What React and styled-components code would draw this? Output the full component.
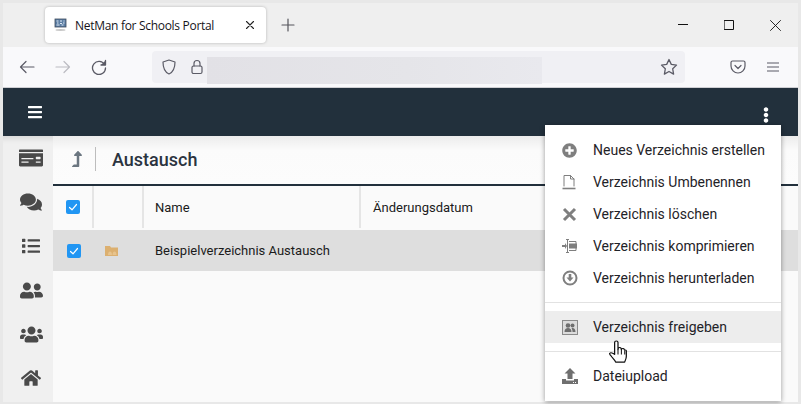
import React from 'react';
import styled, { createGlobalStyle } from 'styled-components';
import {
  FaBars, FaEllipsisV, FaMoneyCheck, FaComments, FaList, FaUserFriends, FaUsers, FaHome,
  FaLevelUpAlt, FaPlusCircle,
} from 'react-icons/fa';

const Global = createGlobalStyle`
  html, body { margin: 0; padding: 0; width: 801px; height: 404px; overflow: hidden; background: #e8e8e8; }
  * { box-sizing: border-box; }
`;

const Frame = styled.div`
  position: relative;
  width: 801px;
  height: 404px;
  padding: 3px 3px 2px 3px;
  display: flex;
  flex-direction: column;
  overflow: hidden;
`;

const TabBar = styled.div`
  height: 44px;
  flex: none;
  background: #efefef;
  display: flex;
  align-items: flex-start;
  padding: 4px 0 0 42px;
`;

const Tab = styled.div`
  width: 221px;
  height: 36px;
  background: #fff;
  border-radius: 4px;
  box-shadow: 0 0 3px rgba(0, 0, 0, 0.25);
  display: flex;
  align-items: center;
  padding: 0 11px 0 9px;
  font: 12px "Open Sans", sans-serif;
  letter-spacing: -0.3px;
  color: #15141a;
`;

const TabTitle = styled.span`
  flex: 1;
  margin-left: 8px;
  white-space: nowrap;
`;

const NewTab = styled.div`
  margin: 11px 0 0 15px;
  width: 14px;
  height: 14px;
  color: #55555c;
`;

const WindowControls = styled.div`
  margin-left: auto;
  display: flex;
  gap: 36px;
  padding: 13px 17px 0 0;
  color: #111;
`;

const NavBar = styled.div`
  height: 41px;
  flex: none;
  background: #f9f9fb;
  border-bottom: 1px solid #cfcfd3;
  display: flex;
  align-items: center;
  padding: 0 0 0 16px;
  color: #5b5b66;
`;

const NavGroup = styled.div`
  display: flex;
  gap: 20px;
  align-items: center;
`;

const UrlBar = styled.div`
  width: 533px;
  height: 32px;
  margin-left: 45px;
  margin-top: -1px;
  background: #f0f0f4;
  border-radius: 4px;
  display: flex;
  align-items: center;
  padding-left: 9px;
`;

const UrlGap = styled.span`
  width: 13px;
`;

const BlurredUrl = styled.div`
  width: 335px;
  height: 27px;
  margin: 6px 0 0 3px;
  align-self: flex-start;
  background: linear-gradient(90deg, #e2e1e6, #e5e5e9 60%, #e9e9ee);
`;

const Star = styled.div`
  margin-left: auto;
  margin-right: 7px;
  height: 18px;
`;

const NavEnd = styled.div`
  display: flex;
  gap: 20px;
  margin-left: 45px;
  align-items: center;
`;

const Header = styled.header`
  height: 48px;
  flex: none;
  background: #22303c;
  color: #fff;
  display: flex;
  align-items: center;
  justify-content: space-between;
  padding: 0 24px 0 24px;
  font-size: 16px;
`;

const MoreButton = styled.div`
  display: flex;
  margin-top: 6px;
`;

const Body = styled.div`
  flex: 1;
  display: flex;
  min-height: 0;
  font-family: Roboto, sans-serif;
`;

const SideNav = styled.nav`
  width: 50px;
  flex: none;
  background: #f0f0f0;
  display: flex;
  flex-direction: column;
  color: #4a4a4a;
  box-shadow: inset 0 8px 6px -6px rgba(0, 0, 0, 0.12);
`;

const SideItem = styled.div`
  height: 44px;
  flex: none;
  width: 100%;
  display: flex;
  align-items: center;
  justify-content: center;
  padding-left: 6px;
  font-size: ${p => p.$size}px;
`;

const Main = styled.main`
  flex: 1;
  min-width: 0;
  background: #fafafa;
`;

const TitleBar = styled.div`
  height: 50px;
  border-bottom: 2px solid #22303c;
  background: linear-gradient(180deg, #ececec 0%, #fbfbfb 30%, #fcfcfc 100%);
  display: flex;
  align-items: center;
  padding: 0 0 2px 16px;
  color: #6b7680;
`;

const TitleRule = styled.div`
  width: 1px;
  height: 24px;
  background: #bdbdbd;
  margin-left: 10px;
`;

const Title = styled.h1`
  margin: 0 0 0 16px;
  font: 500 18px Roboto, sans-serif;
  color: #2b3440;
`;

const Row = styled.div`
  display: grid;
  grid-template-columns: 41px 50px 217px 1fr;
  height: ${p => p.$h}px;
  background: ${p => p.$bg};
  align-items: stretch;
  font-size: 13px;
  color: #1b1b1b;
  margin-bottom: ${p => p.$mb || 0}px;
`;

const Cell = styled.div`
  display: flex;
  align-items: center;
  justify-content: ${p => (p.$center ? 'center' : 'flex-start')};
  padding-left: ${p => p.$pad || 0}px;
  border-right: ${p => (p.$line ? '2px solid #e5e5e5' : '0')};
`;

const Checkbox = styled.div`
  width: 14px;
  height: 14px;
  border-radius: 2px;
  background: #2196f3;
  display: flex;
  align-items: center;
  justify-content: center;
`;

const Menu = styled.div`
  position: absolute;
  left: 545px;
  top: 125px;
  width: 236px;
  height: 276px;
  background: #fff;
  box-shadow: 0 1px 5px rgba(0, 0, 0, 0.4);
  font-family: Roboto, sans-serif;
  padding-top: 9px;
`;

const MenuItem = styled.div`
  height: 32px;
  display: flex;
  align-items: center;
  padding-left: 17px;
  font-size: 14px;
  color: #1f2328;
  background: ${p => (p.$active ? '#ededed' : 'transparent')};
`;

const MenuIcon = styled.div`
  width: 31px;
  display: flex;
  justify-content: flex-start;
  align-items: center;
  color: #7f7f7f;
  font-size: 15px;
`;

const MenuDivider = styled.div`
  height: 1px;
  background: #e2e2e2;
  margin: 8px 0;
`;

const Pointer = styled.svg`
  position: absolute;
  left: 609px;
  top: 340px;
`;

const Stroke = ({ w = 18, h = 18, vb = '0 0 18 18', sw = 1.5, color = 'currentColor', children }) => (
  <svg width={w} height={h} viewBox={vb} fill="none" stroke={color} strokeWidth={sw} strokeLinecap="round" strokeLinejoin="round">
    {children}
  </svg>
);

const Tick = () => (
  <Stroke w={10} h={10} vb="0 0 10 10" sw={1.2} color="#fff"><path d="M1.500 5.500l2.500 2.300 4.500-5.300" /></Stroke>
);

const Favicon = () => (
  <svg width="13" height="14" viewBox="0 0 13 14">
    <rect x="1" y="1" width="11" height="8" fill="#5b7da3" stroke="#3c4a5c" strokeWidth="0.8" />
    <path d="M2.500 3h2M6 3h2M9.500 3h1M3 5h1.500M6 5.500h2M9 5h1.500M2.500 7h3M7.500 7h2" stroke="#dfeaf5" strokeWidth="1" />
    <ellipse cx="6.500" cy="12" rx="5" ry="0.9" fill="#c8c8c8" />
  </svg>
);

const BrowserChrome = () => (
  <>
    <TabBar>
      <Tab>
        <Favicon />
        <TabTitle>NetMan for Schools Portal</TabTitle>
        <Stroke w={10} h={10} vb="0 0 10 10" sw={1.1} color="#222"><path d="M1.500 1.500l7 7M8.500 1.500l-7 7" /></Stroke>
      </Tab>
      <NewTab>
        <Stroke w={14} h={14} vb="0 0 14 14" sw={1.2}><path d="M7 1v12M1 7h12" /></Stroke>
      </NewTab>
      <WindowControls>
        <Stroke w={10} h={10} vb="0 0 10 10" sw={1} color="#111"><path d="M0 4.500h10" strokeLinecap="butt" /></Stroke>
        <Stroke w={10} h={10} vb="0 0 10 10" sw={1} color="#111"><rect x=".5" y=".5" width="9" height="9" /></Stroke>
        <Stroke w={11} h={11} vb="0 0 11 11" sw={0.9} color="#111"><path d="M.5.5l10 10M10.500.5l-10 10" /></Stroke>
      </WindowControls>
    </TabBar>
    <NavBar>
      <NavGroup>
        <Stroke w={16} h={16} vb="0 0 16 16" sw={1.2}><path d="M15 8H1.500M7 2.500L1.500 8 7 13.500" /></Stroke>
        <Stroke w={16} h={16} vb="0 0 16 16" sw={1.2} color="#bcbcc2"><path d="M1 8h13.500M9 2.500L14.500 8 9 13.500" /></Stroke>
        <Stroke w={16} h={16} vb="0 0 16 16" sw={1.3}><path d="M13.500 5.500A6.500 6.500 0 1 0 14.500 9" /><path d="M14.500 1.500v4.500H10" fill="currentColor" /></Stroke>
      </NavGroup>
      <UrlBar>
        <Stroke w={16} h={16} vb="0 0 16 16" sw={1.2}><path d="M8 1l6 2c0 6-1.500 10-6 12C3.500 13 2 9 2 3z" /></Stroke>
        <UrlGap />
        <Stroke w={14} h={16} vb="0 0 14 16" sw={1.2}><rect x="2" y="7" width="10" height="7.500" rx="1.500" /><path d="M4 7V4.500a3 3 0 0 1 6 0V7" /></Stroke>
        <BlurredUrl />
        <Star>
          <Stroke w={18} h={18} vb="0 0 18 18" sw={1.3}><path d="M9 1.500l2.300 4.900 5.200.7-3.800 3.700.9 5.300L9 13.500l-4.600 2.600.9-5.300-3.800-3.700 5.200-.7z" /></Stroke>
        </Star>
      </UrlBar>
      <NavEnd>
        <Stroke w={16} h={16} vb="0 0 16 16" sw={1.2}><path d="M2.500 2h11A1.500 1.500 0 0 1 15 3.500V7a7 7 0 0 1-14 0V3.500A1.500 1.500 0 0 1 2.500 2z" /><path d="M5 6.500l3 3 3-3" /></Stroke>
        <Stroke w={14} h={14} vb="0 0 14 14" sw={1.1}><path d="M1 3h12M1 7h12M1 11h12" strokeLinecap="butt" /></Stroke>
      </NavEnd>
    </NavBar>
  </>
);

const sideIcons = [
  [FaMoneyCheck, 24], [FaComments, 22], [FaList, 18],
  [FaUserFriends, 23], [FaUsers, 23], [FaHome, 20],
];

const ActionIcons = {
  rename: (
    <Stroke w={14} h={16} vb="0 0 14 16" sw={1}>
      <path d="M2 12V1.500h6.500L12 5v7M8.500 1.500V5H12" />
      <path d="M0.500 14.500h13" strokeWidth="1.600" strokeLinecap="butt" />
    </Stroke>
  ),
  remove: (
    <Stroke w={15} h={15} vb="0 0 15 15" sw={3} color="#7f7f7f">
      <path d="M2 2l11 11M13 2L2 13" strokeLinecap="butt" />
    </Stroke>
  ),
  compress: (
    <svg width="15" height="14" viewBox="0 0 15 14" fill="#7f7f7f">
      <path d="M0 6h3V4l2 3-2 3V8H0z" />
      <path d="M5.500 .5v13M4 .5h3M4 13.500h3" stroke="#7f7f7f" strokeWidth="1" fill="none" />
      <path d="M7 2.500h7v9H7" stroke="#7f7f7f" strokeWidth="1" fill="none" />
      <rect x="7" y="4.500" width="8" height="5" />
    </svg>
  ),
  download: (
    <svg width="16" height="16" viewBox="0 0 16 16">
      <circle cx="8" cy="8" r="6.500" fill="none" stroke="#7f7f7f" strokeWidth="2" />
      <path d="M6.700 4h2.600v3.500H11.500L8 11.500 4.500 7.500h2.200z" fill="#7f7f7f" />
    </svg>
  ),
  share: (
    <svg width="16" height="15" viewBox="0 0 16 15">
      <rect x=".5" y=".5" width="15" height="14" fill="#dcdcdc" stroke="#8a8a8a" />
      <circle cx="6" cy="5.500" r="2.300" fill="#6e6e6e" />
      <circle cx="10.500" cy="5.500" r="2" fill="#6e6e6e" />
      <path d="M2.500 12c0-3 1.500-4 3.500-4s3.500 1 3.500 4zM10.500 12c0-1.500-.3-2.800-1-3.700 2-.7 4 .3 4 3.700z" fill="#6e6e6e" />
    </svg>
  ),
  upload: (
    <svg width="16" height="16" viewBox="0 0 16 16" fill="#6f6f6f">
      <path d="M8 0l5.500 5.500H10.500V11h-5V5.500H2.500z" />
      <path d="M0 11h4v1.500h8V11h4v5H0z" />
      <path d="M11 14h1v1h-1zM13 14h1v1h-1z" fill="#fff" />
    </svg>
  ),
};

const items = [
  [<FaPlusCircle key="i" />, 'Neues Verzeichnis erstellen'],
  [ActionIcons.rename, 'Verzeichnis Umbenennen'],
  [ActionIcons.remove, 'Verzeichnis löschen'],
  [ActionIcons.compress, 'Verzeichnis komprimieren'],
  [ActionIcons.download, 'Verzeichnis herunterladen'],
];

export default function App() {
  return (
    <Frame>
      <Global />
      <BrowserChrome />
      <Header>
        <FaBars />
        <MoreButton><FaEllipsisV /></MoreButton>
      </Header>
      <Body>
        <SideNav>
          {sideIcons.map(([Icon, size], i) => (
            <SideItem key={i} $size={size}><Icon /></SideItem>
          ))}
        </SideNav>
        <Main>
          <TitleBar>
            <FaLevelUpAlt size={16} />
            <TitleRule />
            <Title>Austausch</Title>
          </TitleBar>
          <Row $h={42} $bg="#fafafa" $mb={2}>
            <Cell $center $line><Checkbox><Tick /></Checkbox></Cell>
            <Cell $line />
            <Cell $pad={11} $line>Name</Cell>
            <Cell $pad={12}>Änderungsdatum</Cell>
          </Row>
          <Row $h={41} $bg="#dedede">
            <Cell $center><Checkbox><Tick /></Checkbox></Cell>
            <Cell $pad={11}>
              <svg width="13" height="10" viewBox="0 0 13 10">
                <path d="M0 0h5l1 1.500h7V10H0z" fill="#dcb070" />
                <path d="M3 9c0-2.500 1-3.500 2-3.500S7 6.500 7 9zM7.500 9c0-2 .8-3.500 2-3.500s2 1.500 2 3.500z" fill="#e8c48e" />
              </svg>
            </Cell>
            <Cell $pad={11}>Beispielverzeichnis Austausch</Cell>
            <Cell />
          </Row>
        </Main>
      </Body>
      <Menu>
        {items.map(([icon, label]) => (
          <MenuItem key={label}><MenuIcon>{icon}</MenuIcon>{label}</MenuItem>
        ))}
        <MenuDivider />
        <MenuItem $active><MenuIcon>{ActionIcons.share}</MenuIcon>Verzeichnis freigeben</MenuItem>
        <MenuDivider />
        <MenuItem><MenuIcon>{ActionIcons.upload}</MenuIcon>Dateiupload</MenuItem>
      </Menu>
      <Pointer width="18" height="25" viewBox="0 0 16 26" preserveAspectRatio="none">
        <path d="M5 15V2.500a1.500 1.500 0 0 1 3 0V10l.2-1.500a1.400 1.400 0 0 1 2.600.5l.2 1 .2-.6a1.300 1.300 0 0 1 2.400.6l.2.500c1-.5 1.600.2 1.600 1V17c0 3-1 4-1.500 6h-8c-.5-2-2-3-3.500-5.500C1.500 15.500 0 15 .7 13.800 1.500 12.800 3.500 13.500 5 15z" fill="#fff" stroke="#111" strokeWidth="1.100" strokeLinejoin="round" />
        <path d="M8 10v5M11 10v5M14 11v4" stroke="#111" strokeWidth="0.9" fill="none" />
      </Pointer>
    </Frame>
  );
}
